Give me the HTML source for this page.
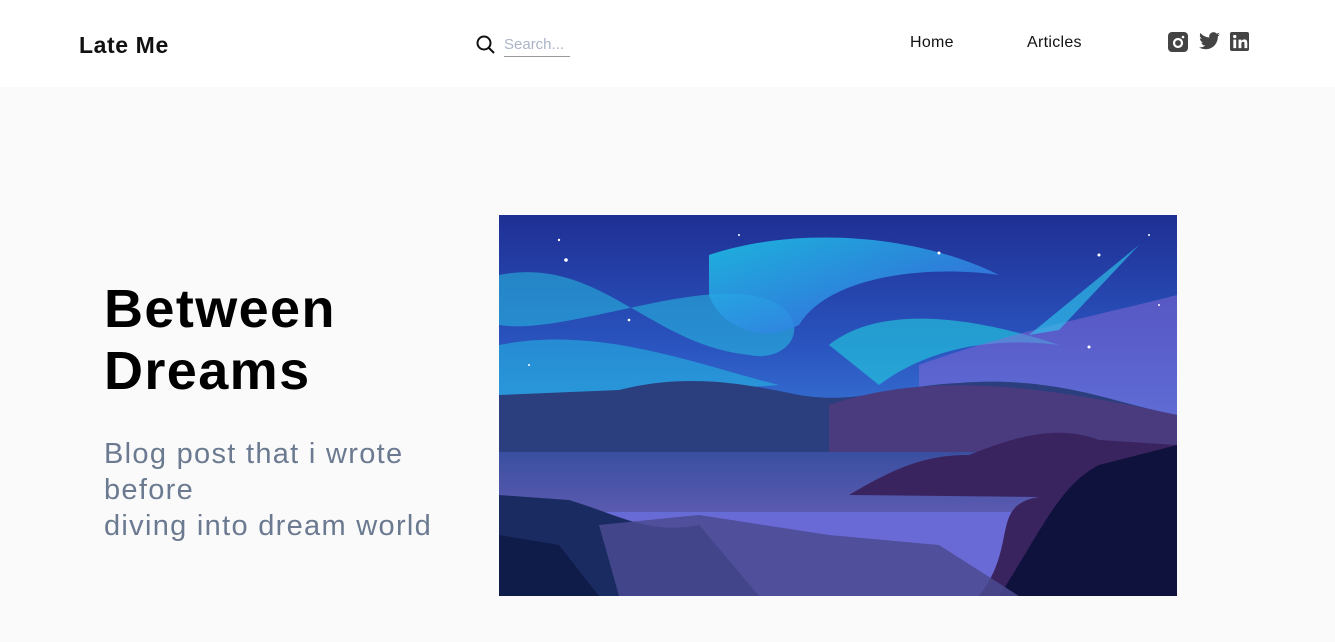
<!DOCTYPE html>
<html><head><style>
*{margin:0;padding:0;box-sizing:border-box}
body{width:1335px;height:642px;background:#fafafa;font-family:"Liberation Sans",sans-serif;overflow:hidden;position:relative}
header{position:absolute;top:0;left:0;width:1335px;height:87px;background:#fff}
.logo{position:absolute;left:79px;top:32px;font-size:23px;font-weight:bold;color:#111;letter-spacing:0.6px}
.search{position:absolute;left:476px;top:35px}
.sinput{position:absolute;left:504px;top:36px;width:66px;height:21px;border-bottom:1px solid #999;color:#aab4c8;font-size:15px}
.nav{position:absolute;top:34px;font-size:16px;color:#111;letter-spacing:0.3px}
h1{position:absolute;left:104px;top:278px;font-size:54px;line-height:62px;font-weight:bold;color:#000;letter-spacing:1.4px}
p{position:absolute;left:104px;top:436px;font-size:29px;line-height:36px;color:#6b7a90;width:360px;letter-spacing:1.3px}
</style></head><body>
<header>
<div class="logo">Late Me</div>
<svg class="search" width="20" height="20" viewBox="0 0 20 20"><circle cx="8" cy="8" r="6.5" fill="none" stroke="#111" stroke-width="2"/><line x1="13" y1="13" x2="18" y2="18" stroke="#111" stroke-width="2"/></svg>
<div class="sinput">Search...</div>
<div class="nav" style="left:910px">Home</div>
<div class="nav" style="left:1027px">Articles</div>
<svg style="position:absolute;left:1168px;top:32px" width="20" height="20" viewBox="0 0 20 20"><rect width="20" height="20" rx="4" fill="#444"/><circle cx="10" cy="11" r="4" fill="none" stroke="#fff" stroke-width="2.2"/><circle cx="15" cy="5" r="1.3" fill="#fff"/></svg>
<svg style="position:absolute;left:1199px;top:32px" width="21" height="18" viewBox="0 0 24 20"><path d="M24 2.4a10 10 0 0 1-2.8.8A5 5 0 0 0 23.3.4a10 10 0 0 1-3.1 1.2A4.9 4.9 0 0 0 11.8 6 14 14 0 0 1 1.700.9a4.9 4.9 0 0 0 1.5 6.6A4.9 4.9 0 0 1 1 6.9a4.9 4.9 0 0 0 3.9 4.8 5 5 0 0 1-2.2.1 4.9 4.9 0 0 0 4.6 3.4A10 10 0 0 1 0 17.2 14 14 0 0 0 7.5 19.4c9.1 0 14-7.5 14-14v-.6A10 10 0 0 0 24 2.4z" fill="#444"/></svg>
<svg style="position:absolute;left:1230px;top:32px" width="19" height="19" viewBox="0 0 20 20"><rect width="20" height="20" rx="2" fill="#444"/><rect x="3.5" y="8" width="3" height="9" fill="#fff"/><circle cx="5" cy="4.8" r="1.8" fill="#fff"/><path d="M9 8h3v1.5c.6-1 1.7-1.8 3.2-1.800 2.3 0 3 1.5 3 4V17h-3v-4.8c0-1.2-.3-2-1.4-2s-1.8.8-1.8 2V17H9z" fill="#fff"/></svg>
</header>
<h1>Between<br>Dreams</h1>
<p>Blog post that i wrote before<br>diving into dream world</p>
<svg style="position:absolute;left:499px;top:215px" width="678" height="381" viewBox="0 0 678 381">
<defs>
<linearGradient id="sky" x1="0" y1="0" x2="0" y2="1"><stop offset="0" stop-color="#1f2f94"/><stop offset=".35" stop-color="#2a55c0"/><stop offset=".6" stop-color="#3a7ad8"/><stop offset=".8" stop-color="#6a6ad6"/></linearGradient>
<linearGradient id="au" x1="0" y1="0" x2="1" y2="1"><stop offset="0" stop-color="#1cc8e8"/><stop offset="1" stop-color="#3d5ee0"/></linearGradient>
<linearGradient id="wat" x1="0" y1="0" x2="0" y2="1"><stop offset="0" stop-color="#3a4fa0"/><stop offset="1" stop-color="#5a5ab0"/></linearGradient>
</defs>
<rect width="678" height="381" fill="url(#sky)"/>
<path d="M0 60 C100 40 150 130 250 140 C300 150 320 90 250 80 C180 70 60 120 0 110z" fill="#26c9e6" opacity=".5"/>
<path d="M210 40 C300 10 420 20 500 60 C430 50 330 60 300 110 C260 130 220 110 210 80z" fill="url(#au)" opacity=".85"/>
<path d="M330 130 C380 90 470 100 560 130 C480 120 420 140 380 170z" fill="#22d0e0" opacity=".6"/>
<path d="M0 130 C100 110 200 150 280 170 L0 190z" fill="#22c5e8" opacity=".5"/>
<path d="M420 150 C500 120 600 100 678 80 L678 200 L420 200z" fill="#8a6ad8" opacity=".5"/>
<path d="M0 180 L120 175 C180 160 230 165 300 180 C360 190 400 170 460 168 C560 160 620 190 678 200 L678 240 L0 240z" fill="#2b3f7e"/>
<path d="M330 190 C420 160 520 165 678 200 L678 240 L330 240z" fill="#4a3a7e"/>
<rect y="237" width="678" height="60" fill="url(#wat)"/>
<path d="M350 280 C400 250 430 240 470 240 C520 220 560 210 600 225 L678 230 L678 381 L480 381 C520 330 490 290 540 282z" fill="#3a2460"/>
<path d="M500 381 C540 320 560 270 600 250 L678 230 L678 381z" fill="#10123e"/>
<path d="M0 280 L70 285 C120 300 150 320 200 310 L260 381 L0 381z" fill="#1a2b62"/>
<path d="M100 310 L200 300 L330 320 L440 330 L520 381 L120 381z" fill="#4a4a90" opacity=".85"/>
<path d="M0 320 L60 330 L100 381 L0 381z" fill="#0f1c4a"/>
<path d="M530 120 L640 30 L560 115 Z" fill="#2fd0f0" opacity=".6"/>
<g fill="#fff"><circle cx="60" cy="25" r="1.2"/><circle cx="130" cy="105" r="1.3"/><circle cx="440" cy="38" r="1.5"/><circle cx="600" cy="40" r="1.5"/><circle cx="590" cy="132" r="1.5"/><circle cx="660" cy="90" r="1"/><circle cx="67" cy="45" r="1.8"/><circle cx="240" cy="20" r="1"/><circle cx="30" cy="150" r="1"/><circle cx="650" cy="20" r="1"/></g>
</svg>
</body></html>
